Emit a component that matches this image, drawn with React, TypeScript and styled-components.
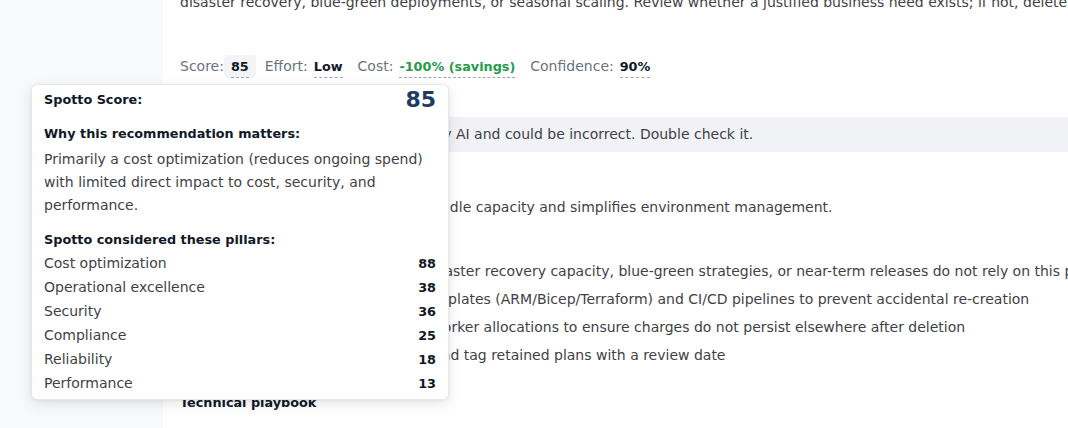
import React from "react";
import styled, { createGlobalStyle } from "styled-components";

const GlobalStyle = createGlobalStyle`
  html, body { margin: 0; padding: 0; background: #ffffff; }
  body { font-family: "DejaVu Sans", "Noto Sans", sans-serif; color: #3f3f46; }
  * { box-sizing: border-box; }
`;

const Page = styled.div`
  position: relative;
  display: flex;
  width: 100vw;
  height: 100vh;
  overflow: hidden;
`;

const Sidebar = styled.aside`
  flex: 0 0 163px;
  background: #f8f9fb;
`;

const Main = styled.main`
  flex: 1;
  min-width: 0;
  overflow: hidden;
  background: #ffffff;
  padding-left: 17px;
`;

const Content = styled.div`
  width: 1200px;
  display: flex;
  flex-direction: column;
  font-size: 14px;
  line-height: 24px;
  color: #3f3f46;
`;

const Paragraph = styled.p<{ $top?: number }>`
  margin: ${(p) => p.$top ?? 0}px 0 0;
  white-space: nowrap;
`;

const ScoreRow = styled.div`
  display: flex;
  align-items: center;
  gap: 9px;
  margin-top: 40px;
`;

const Metric = styled.div`
  display: flex;
  align-items: center;
`;

const MetricLabel = styled.span`
  color: #6b7280;
  font-size: 14px;
`;

const MetricValue = styled.span<{ $chip?: boolean; $tone?: "green" | "dark" }>`
  display: inline-flex;
  padding: 0 ${(p) => (p.$chip ? 7 : 6)}px;
  border-radius: 4px;
  background: ${(p) => (p.$chip ? "#f3f4f6" : "transparent")};
  color: ${(p) => (p.$tone === "green" ? "#1f9d49" : "#111827")};
  font-weight: 700;
  font-size: 12.8px;
`;

const Dotted = styled.span`
  display: inline-block;
  padding-top: 2px;
  line-height: 20px;
  border-bottom: 1px dashed #a3a8b3;
`;

const Banner = styled.div`
  margin-top: 39px;
  height: 35px;
  line-height: 35px;
  padding: 0 26px;
  background: #f1f2f5;
  color: #3f3f46;
`;

const SectionTitle = styled.h3<{ $top: number }>`
  margin: ${(p) => p.$top}px 0 0;
  font-size: 12.8px;
  line-height: 24px;
  font-weight: 700;
  color: #111827;
`;

const List = styled.ul`
  margin: 4px 0 0;
  padding-left: 20px;
  display: flex;
  flex-direction: column;
  gap: 4px;
  white-space: nowrap;
`;

const Item = styled.li``;

/* Popover */
const Popover = styled.div`
  position: absolute;
  left: 31px;
  top: 84px;
  width: 418px;
  padding: 4px 12px 4px;
  background: #ffffff;
  border: 1px solid #e6e8ec;
  border-radius: 6px;
  box-shadow: 0 4px 14px rgba(15, 23, 42, 0.1), 0 1px 3px rgba(15, 23, 42, 0.06);
  font-size: 14px;
  color: #3f3f46;
`;

const PopHeader = styled.div`
  display: flex;
  align-items: center;
  justify-content: space-between;
  height: 22px;
`;

const PopTitle = styled.div<{ $top?: number }>`
  margin-top: ${(p) => p.$top ?? 0}px;
  font-size: 12.8px;
  font-weight: 700;
  line-height: 20px;
  color: #111827;
`;

const BigScore = styled.div`
  font-size: 22px;
  font-weight: 700;
  line-height: 22px;
  color: #1f3b63;
`;

const PopText = styled.p`
  margin: 4px 0 0;
  line-height: 23px;
`;

const Pillars = styled.div`
  margin-top: 1px;
  display: flex;
  flex-direction: column;
`;

const PillarRow = styled.div`
  display: flex;
  justify-content: space-between;
  align-items: center;
  height: 24px;
`;

const PillarValue = styled.span`
  font-weight: 700;
  font-size: 12.8px;
  color: #111827;
`;

const pillars: [string, number][] = [
  ["Cost optimization", 88],
  ["Operational excellence", 38],
  ["Security", 36],
  ["Compliance", 25],
  ["Reliability", 18],
  ["Performance", 13],
];

export default function App() {
  return (
    <>
      <GlobalStyle />
      <Page>
        <Sidebar />
        <Main>
          <Content>
            <Paragraph $top={-34}>
              This App Service plan has no apps deployed, yet it continues to accrue compute charges every month. It may have been provisioned for
              <br />
              disaster recovery, blue-green deployments, or seasonal scaling. Review whether a justified business need exists; if not, delete the plan to stop the spend.
            </Paragraph>

            <ScoreRow>
              <Metric>
                <MetricLabel>Score:</MetricLabel>
                <MetricValue $chip>
                  <Dotted>85</Dotted>
                </MetricValue>
              </Metric>
              <Metric>
                <MetricLabel>Effort:</MetricLabel>
                <MetricValue>
                  <Dotted>Low</Dotted>
                </MetricValue>
              </Metric>
              <Metric>
                <MetricLabel>Cost:</MetricLabel>
                <MetricValue $tone="green">
                  <Dotted>-100% (savings)</Dotted>
                </MetricValue>
              </Metric>
              <Metric>
                <MetricLabel>Confidence:</MetricLabel>
                <MetricValue>
                  <Dotted>90%</Dotted>
                </MetricValue>
              </Metric>
            </ScoreRow>

            <Banner>This explanation was generated by AI and could be incorrect. Double check it.</Banner>

            <SectionTitle $top={15}>Expected impact</SectionTitle>
            <Paragraph $top={4}>
              Deleting the unused plans eliminates idle capacity and simplifies environment management.
            </Paragraph>

            <SectionTitle $top={12}>Before you delete</SectionTitle>
            <List>
              <Item>
                Verify with the app owners that disaster recovery capacity, blue-green strategies, or near-term releases do not rely on this plan
              </Item>
              <Item>
                Clean up related infrastructure templates (ARM/Bicep/Terraform) and CI/CD pipelines to prevent accidental re-creation
              </Item>
              <Item>Check autoscale settings and all worker allocations to ensure charges do not persist elsewhere after deletion</Item>
              <Item>Keep each business justification, and tag retained plans with a review date</Item>
            </List>

            <SectionTitle $top={24}>Technical playbook</SectionTitle>
          </Content>
        </Main>

        <Popover>
          <PopHeader>
            <PopTitle>Spotto Score:</PopTitle>
            <BigScore>85</BigScore>
          </PopHeader>
          <PopTitle $top={13}>Why this recommendation matters:</PopTitle>
          <PopText>
            Primarily a cost optimization (reduces ongoing spend) with limited direct impact to cost, security, and performance.
          </PopText>
          <PopTitle $top={13}>Spotto considered these pillars:</PopTitle>
          <Pillars>
            {pillars.map(([name, value]) => (
              <PillarRow key={name}>
                <span>{name}</span>
                <PillarValue>{value}</PillarValue>
              </PillarRow>
            ))}
          </Pillars>
        </Popover>
      </Page>
    </>
  );
}
